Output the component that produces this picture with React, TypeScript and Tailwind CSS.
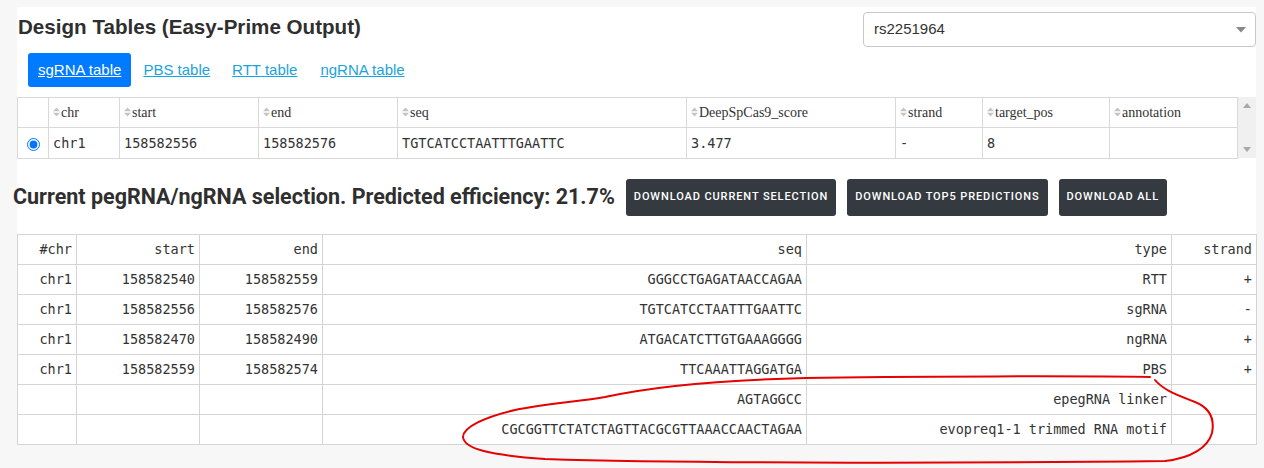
import React from 'react';

const mono = "font-['DejaVu_Sans_Mono',monospace] text-[13.5px]";

const topCols = [
    { key: 'chr', w: 71 },
    { key: 'start', w: 139 },
    { key: 'end', w: 139 },
    { key: 'seq', w: 289 },
    { key: 'DeepSpCas9_score', w: 209 },
    { key: 'strand', w: 87 },
    { key: 'target_pos', w: 127 },
    { key: 'annotation', w: 128 },
];

const topRow = ['chr1', '158582556', '158582576', 'TGTCATCCTAATTTGAATTC', '3.477', '-', '8', ''];

const lowCols = [
    { key: '#chr', w: 59 },
    { key: 'start', w: 123 },
    { key: 'end', w: 123 },
    { key: 'seq', w: 484 },
    { key: 'type', w: 365 },
    { key: 'strand', w: 85 },
];

const lowRows = [
    ['chr1', '158582540', '158582559', 'GGGCCTGAGATAACCAGAA', 'RTT', '+'],
    ['chr1', '158582556', '158582576', 'TGTCATCCTAATTTGAATTC', 'sgRNA', '-'],
    ['chr1', '158582470', '158582490', 'ATGACATCTTGTGAAAGGGG', 'ngRNA', '+'],
    ['chr1', '158582559', '158582574', 'TTCAAATTAGGATGA', 'PBS', '+'],
    ['', '', '', 'AGTAGGCC', 'epegRNA linker', ''],
    ['', '', '', 'CGCGGTTCTATCTAGTTACGCGTTAAACCAACTAGAA', 'evopreq1-1 trimmed RNA motif', ''],
];

function SortIcon() {
    return (
        <svg width="7" height="10" viewBox="0 0 7 10" className="inline-block mr-[1px] -mt-[3px]">
            <path d="M0 4.3 L3.5 0.5 L7 4.3 Z" fill="#c4c4c4" />
            <path d="M0 5.7 L3.5 9.5 L7 5.7 Z" fill="#c4c4c4" />
        </svg>
    );
}

export default function App() {
    return (
        <div className="relative w-[1264px] h-[468px] overflow-hidden bg-[#f7f7f7] pt-[7px] font-['Liberation_Sans',Arial,sans-serif] text-[#333]">
            <div className="ml-[17px] w-[1239px] bg-white">
                {/* HEADER */}
                <div className="flex justify-between">
                    <div>
                        <h1 className="h-[40px] leading-[40px] text-[20.6px] font-bold text-[#2f2f2f] pl-[1px]">
                            Design Tables (Easy-Prime Output)
                        </h1>
                        <div className="flex items-center mt-[6px] ml-[11px] text-[15px]">
                            <a className="h-[34px] px-[10px] flex items-center bg-[#007bff] text-white underline rounded-[3px]">sgRNA table</a>
                            <a className="ml-[12px] text-[#1aa3dc] underline">PBS table</a>
                            <a className="ml-[22px] text-[#1aa3dc] underline">RTT table</a>
                            <a className="ml-[23px] text-[#1aa3dc] underline">ngRNA table</a>
                        </div>
                    </div>
                    <div className="mt-[5px] w-[393px] h-[35px] border border-[#c8c8c8] rounded-[4px] flex items-center justify-between pl-[10px] pr-[9px] text-[15px] text-[#333]">
                        <span>rs2251964</span>
                        <svg width="10" height="6" viewBox="0 0 10 6"><path d="M0 0 L10 0 L5 5.5 Z" fill="#888" /></svg>
                    </div>
                </div>

                {/* SGRNA TABLE */}
                <div className="flex mt-[10px]">
                    <table className="table-fixed border-collapse w-[1220px]">
                        <colgroup>
                            <col style={{ width: 31 }} />
                            {topCols.map((c) => <col key={c.key} style={{ width: c.w }} />)}
                        </colgroup>
                        <thead>
                            <tr className="h-[30px]">
                                <th className="border border-[#d9d9d9]"></th>
                                {topCols.map((c) => (
                                    <th key={c.key} className="border border-[#d9d9d9] text-left font-normal pl-[4px] font-['Liberation_Serif',serif] text-[14px] text-[#333]">
                                        <SortIcon />{c.key}
                                    </th>
                                ))}
                            </tr>
                        </thead>
                        <tbody>
                            <tr className="h-[31px]">
                                <td className="border border-[#d9d9d9] text-center">
                                    <input type="radio" checked readOnly className="accent-[#0075ff] align-middle mt-[1px]" />
                                </td>
                                {topRow.map((v, i) => (
                                    <td key={i} className={`border border-[#d9d9d9] pl-[4px] ${mono} text-[#333]`}>{v}</td>
                                ))}
                            </tr>
                        </tbody>
                    </table>
                    <div className="w-[19px] h-[61px] bg-[#f0f0f0] flex flex-col items-center justify-between py-[6px]">
                        <svg width="8" height="5" viewBox="0 0 8 5"><path d="M0 5 L4 0 L8 5 Z" fill="#a8a8a8" /></svg>
                        <svg width="8" height="5" viewBox="0 0 8 5"><path d="M0 0 L4 5 L8 0 Z" fill="#a8a8a8" /></svg>
                    </div>
                </div>

                {/* SELECTION HEADER */}
                <div className="flex items-center mt-[20px] h-[37px]">
                    <h2 className="-ml-[4px] font-['Roboto',sans-serif] font-bold text-[21.5px] text-[#2f2f2f] whitespace-nowrap">
                        Current pegRNA/ngRNA selection. Predicted efficiency: 21.7%
                    </h2>
                    <div className="flex gap-[11px] ml-[11px] font-['Roboto',sans-serif] text-[11px] font-medium tracking-[0.9px] text-white">
                        <button className="h-[37px] px-[8px] bg-[#343a40] rounded-[3px]">DOWNLOAD CURRENT SELECTION</button>
                        <button className="h-[37px] px-[8px] bg-[#343a40] rounded-[3px]">DOWNLOAD TOP5 PREDICTIONS</button>
                        <button className="h-[37px] px-[8px] bg-[#343a40] rounded-[3px]">DOWNLOAD ALL</button>
                    </div>
                </div>

                {/* PEGRNA TABLE */}
                <table className={`table-fixed border-collapse w-[1239px] mt-[18px] ${mono} text-[#333]`}>
                    <colgroup>
                        {lowCols.map((c) => <col key={c.key} style={{ width: c.w }} />)}
                    </colgroup>
                    <thead>
                        <tr className="h-[30px]">
                            {lowCols.map((c) => (
                                <th key={c.key} className="border border-[#d4d4d4] text-right font-normal pr-[4px]">{c.key}</th>
                            ))}
                        </tr>
                    </thead>
                    <tbody>
                        {lowRows.map((r, i) => (
                            <tr key={i} className="h-[30px]">
                                {r.map((v, j) => (
                                    <td key={j} className="border border-[#d4d4d4] text-right pr-[4px] whitespace-nowrap">{v}</td>
                                ))}
                            </tr>
                        ))}
                    </tbody>
                </table>
            </div>

            {/* hand-drawn annotation */}
            <svg className="absolute inset-0 pointer-events-none" width="1264" height="468" viewBox="0 0 1264 468">
                <path
                    d="M1150 377 C1100 376 900 376 806 378 C720 380 650 387 605 397 C575 402 545 404 515 410 C485 417 463 427 463 437 C464 449 490 455 545 459 C700 464 1000 463 1165 461 C1192 458 1208 447 1212 433 C1215 418 1210 408 1195 402 C1178 395 1163 390 1155 380"
                    fill="none"
                    stroke="#e60000"
                    strokeWidth="2"
                    strokeLinecap="round"
                />
            </svg>
        </div>
    );
}
